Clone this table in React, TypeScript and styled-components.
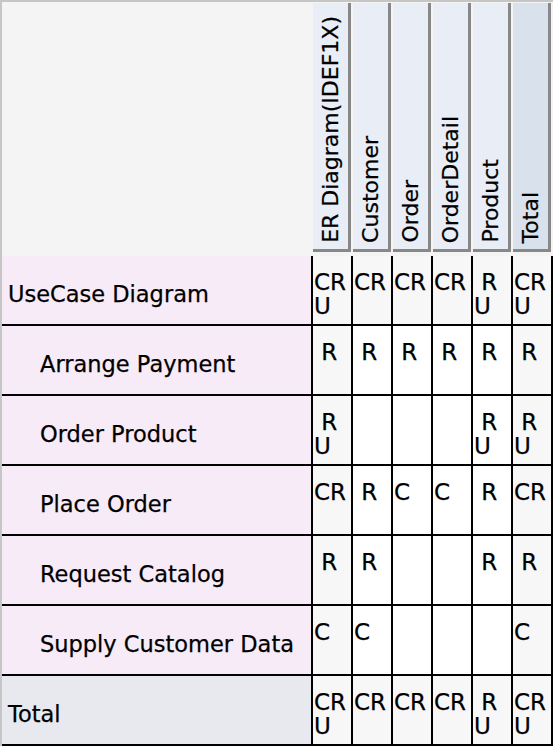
import React from "react";
import styled, { createGlobalStyle } from "styled-components";

const GlobalStyle = createGlobalStyle`
  html, body {
    margin: 0;
    padding: 0;
    background: #ffffff;
  }
  body {
    font-family: "DejaVu Sans", "Liberation Sans", sans-serif;
    color: #000000;
    -webkit-text-stroke: 0.25px #000000;
  }
`;

const Matrix = styled.div`
  width: 553px;
  box-sizing: border-box;
  border-top: 2px solid #c6c6c6;
  border-left: 2px solid #c6c6c6;
`;

const HeaderRow = styled.div`
  display: grid;
  grid-template-columns: 309px repeat(6, 38px);
  column-gap: 2px;
  height: 254px;
  padding-right: 2px;
  background: #f4f4f4;
`;

const HeaderCell = styled.div<{ $total?: boolean }>`
  box-sizing: border-box;
  margin-top: 1px;
  height: 249px;
  display: flex;
  justify-content: center;
  align-items: flex-end;
  padding-bottom: 6px;
  background: ${(p) => (p.$total ? "#d8e1ec" : "#e9eef6")};
  border-right: 3px solid #888888;
  border-bottom: 3px solid #888888;
`;

const HeaderLabel = styled.span`
  writing-mode: vertical-rl;
  transform: rotate(180deg);
  font-size: 22px;
  line-height: 26px;
  white-space: nowrap;
`;

const Row = styled.div`
  display: grid;
  grid-template-columns: 309px repeat(6, 38px);
  column-gap: 2px;
  height: 70px;
  box-sizing: border-box;
  padding: 0 2px 2px 0;
  background: #000000;
`;

const RowLabel = styled.div<{ $indent?: boolean; $total?: boolean }>`
  display: flex;
  align-items: center;
  padding: 8px 0 0 ${(p) => (p.$indent ? "38px" : "6px")};
  font-size: 22.5px;
  white-space: nowrap;
  background: ${(p) => (p.$total ? "#e8e9ee" : "#f6ebf7")};
`;

const Cell = styled.div<{ $shaded?: boolean }>`
  padding: 14px 0 0 1px;
  font-size: 23px;
  line-height: 24px;
  white-space: pre;
  overflow: hidden;
  background: ${(p) => (p.$shaded ? "#f7f7f7" : "#ffffff")};
`;

const columns = ["ER Diagram(IDEF1X)", "Customer", "Order", "OrderDetail", "Product", "Total"];

interface MatrixRow {
  label: string;
  indent?: boolean;
  summary?: boolean;
  total?: boolean;
  cells: string[];
}

const rows: MatrixRow[] = [
  { label: "UseCase Diagram", summary: true, cells: ["CRU", "CR", "CR", "CR", "RU", "CRU"] },
  { label: "Arrange Payment", indent: true, cells: ["R", "R", "R", "R", "R", "R"] },
  { label: "Order Product", indent: true, cells: ["RU", "", "", "", "RU", "RU"] },
  { label: "Place Order", indent: true, cells: ["CR", "R", "C", "C", "R", "CR"] },
  { label: "Request Catalog", indent: true, cells: ["R", "R", "", "", "R", "R"] },
  { label: "Supply Customer Data", indent: true, cells: ["C", "C", "", "", "", "C"] },
  { label: "Total", summary: true, total: true, cells: ["CRU", "CR", "CR", "CR", "RU", "CRU"] },
];

// "RU" -> " R\nU", keeps the letter slots like the original grid
const crudText = (v: string) => {
  const c = v.includes("C");
  const r = v.includes("R");
  const u = v.includes("U");
  let first = "";
  if (c || r) first = (c ? "C" : " ") + (r ? "R" : "");
  return u ? `${first}\nU` : first;
};

export default function App() {
  return (
    <>
      <GlobalStyle />
      <Matrix>
        <HeaderRow>
          <div />
          {columns.map((name, i) => (
            <HeaderCell key={name} $total={i === columns.length - 1}>
              <HeaderLabel>{name}</HeaderLabel>
            </HeaderCell>
          ))}
        </HeaderRow>
        {rows.map((row) => (
          <Row key={row.label}>
            <RowLabel $indent={row.indent} $total={row.total}>
              {row.label}
            </RowLabel>
            {row.cells.map((v, i) => (
              <Cell key={i} $shaded={row.summary || i === 0 || i === row.cells.length - 1}>
                {crudText(v)}
              </Cell>
            ))}
          </Row>
        ))}
      </Matrix>
    </>
  );
}
